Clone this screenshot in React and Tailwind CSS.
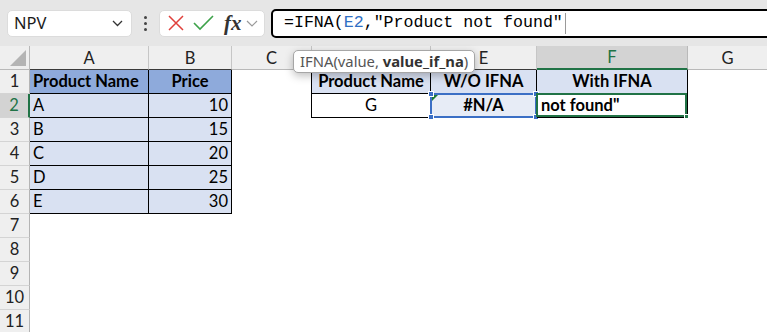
const cellFont = { fontFamily: 'Lato, "Noto Sans", sans-serif' };

function Corner() {
  return (
    <div className="relative bg-[#efefef] border-r border-b border-[#b9b9b9]">
      <svg width="30" height="24" className="absolute left-0 top-0">
        <polygon points="10,20 26,4 26,20" fill="#b4b4b4" />
      </svg>
    </div>
  );
}

function ColHead({ label, active, dark }) {
  if (active) {
    return (
      <div className="flex items-center justify-center bg-[#d3d3d3] border-r border-[#b9b9b9] border-b-2 border-b-[#217346] text-[#217346] text-[16.5px] pt-[1px]">
        {label}
      </div>
    );
  }
  return (
    <div
      className={
        'flex items-center justify-center bg-[#efefef] border-r border-[#c6c6c6] border-b text-[16.5px] text-[#222] pt-[1px] ' +
        (dark ? 'border-b-[#3a3a3a]' : 'border-b-[#b9b9b9]')
      }
    >
      {label}
    </div>
  );
}

function RowHead({ n, active }) {
  if (active) {
    return (
      <div className="flex items-center justify-center bg-[#d3d3d3] border-b border-[#d4d4d4] border-r-2 border-r-[#217346] text-[#217346] text-[16.5px]">
        {n}
      </div>
    );
  }
  return (
    <div className="flex items-center justify-center bg-[#efefef] border-b border-[#d4d4d4] border-r border-r-[#b4b4b4] text-[16.5px] text-[#222]">
      {n}
    </div>
  );
}

function Cell({ className = '', children }) {
  return (
    <div className={'relative flex items-center text-[16.5px] text-black ' + className}>
      {children}
    </div>
  );
}

const products = [
  ['A', 10],
  ['B', 15],
  ['C', 20],
  ['D', 25],
  ['E', 30],
];

export default function App() {
  const rows = [];

  // row 1
  rows.push(
    <RowHead key="r1" n={1} />,
    <Cell key="a1" className="bg-[#8eaadb] border-r border-b border-black font-bold pl-[3px]">Product Name</Cell>,
    <Cell key="b1" className="bg-[#8eaadb] border-r border-b border-black font-bold justify-center">Price</Cell>,
    <Cell key="c1" className="border-r border-black" />,
    <Cell key="d1" className="bg-[#d9e1f2] border-r border-b border-black font-bold justify-center">Product Name</Cell>,
    <Cell key="e1" className="bg-[#d9e1f2] border-r border-b border-black font-bold justify-center">W/O IFNA</Cell>,
    <Cell key="f1" className="bg-[#d9e1f2] border-r border-b border-black font-bold justify-center">With IFNA</Cell>,
    <Cell key="g1" />
  );

  // rows 2..6
  products.forEach(([name, price], i) => {
    const n = i + 2;
    rows.push(
      <RowHead key={'r' + n} n={n} active={n === 2} />,
      <Cell key={'a' + n} className="bg-[#d9e1f2] border-r border-b border-black pl-[3px]">{name}</Cell>,
      <Cell key={'b' + n} className="bg-[#d9e1f2] border-r border-b border-black justify-end pr-[3px]">{price}</Cell>
    );
    if (n === 2) {
      rows.push(
        <Cell key="c2" className="border-r border-black" />,
        <Cell key="d2" className="border-r border-b border-black justify-center">G</Cell>,
        <Cell key="e2" className="bg-[#e7ecf6] border-r border-b border-black font-bold justify-center">
          #N/A
          <div className="absolute -left-[1px] -top-[1px] -right-[1px] -bottom-[1px] border-2 border-[#3b6fc5]" />
          <svg width="6" height="6" className="absolute left-[1px] top-[1px]">
            <polygon points="0,0 6,0 0,6" fill="#1e7b34" />
          </svg>
          <div className="absolute -left-[3px] -top-[3px] w-[6px] h-[6px] bg-[#3b6fc5] border border-white" />
          <div className="absolute -right-[3px] -top-[3px] w-[6px] h-[6px] bg-[#3b6fc5] border border-white" />
          <div className="absolute -left-[3px] -bottom-[3px] w-[6px] h-[6px] bg-[#3b6fc5] border border-white" />
          <div className="absolute -right-[3px] -bottom-[3px] w-[6px] h-[6px] bg-[#3b6fc5] border border-white" />
        </Cell>,
        <Cell key="f2" className="border-r border-b border-black font-bold pl-[4px]">
          not found"
          <div className="absolute -left-[1px] -top-[1px] right-0 bottom-0 border-2 border-[#217346]" />
          <div className="absolute -right-[2px] -bottom-[2px] w-[5px] h-[5px] bg-[#217346] border border-white" />
        </Cell>,
        <Cell key="g2" />
      );
    } else {
      rows.push(
        <Cell key={'c' + n} />,
        <Cell key={'d' + n} />,
        <Cell key={'e' + n} />,
        <Cell key={'f' + n} />,
        <Cell key={'g' + n} />
      );
    }
  });

  for (let n = 7; n <= 11; n++) {
    rows.push(<RowHead key={'r' + n} n={n} />);
    for (let c = 0; c < 7; c++) rows.push(<Cell key={'x' + n + c} />);
  }

  return (
    <div className="relative w-[767px] h-[332px] overflow-hidden bg-white" style={cellFont}>
      {/* Toolbar */}
      <div className="flex items-center h-[46px] bg-[#e6e6e6] pl-[7px]" style={{ fontFamily: '"Noto Sans", "Open Sans", sans-serif' }}>
        <div className="flex items-center justify-between w-[125px] h-[27px] bg-white rounded-[5px] border border-[#dcdcdc] pl-[6px] pr-[8px]">
          <span className="text-[16.5px] text-[#1a1a1a]">NPV</span>
          <svg width="11" height="7" viewBox="0 0 11 7">
            <polyline points="1,1 5.5,5.5 10,1" fill="none" stroke="#333" strokeWidth="1.3" />
          </svg>
        </div>
        <div className="flex flex-col items-center justify-center gap-[3px] w-[27px]">
          <div className="w-[3px] h-[3px] rounded-full bg-[#444]" />
          <div className="w-[3px] h-[3px] rounded-full bg-[#444]" />
          <div className="w-[3px] h-[3px] rounded-full bg-[#444]" />
        </div>
        <div className="flex items-center w-[106px] h-[27px] bg-white rounded-[5px] border border-[#dcdcdc] pl-[8px]">
          <svg width="16" height="16" viewBox="0 0 16 16">
            <path d="M1 1 L15 15 M15 1 L1 15" stroke="#e0403c" strokeWidth="1.5" fill="none" />
          </svg>
          <svg width="21" height="16" viewBox="0 0 21 16" className="ml-[9px]">
            <polyline points="1,8 7,14 20,1" stroke="#3da24a" strokeWidth="1.6" fill="none" />
          </svg>
          <span
            className="ml-[10px] text-[21px] italic font-bold text-[#333] leading-none"
            style={{ fontFamily: '"Liberation Serif", serif' }}
          >
            fx
          </span>
          <svg width="12" height="8" viewBox="0 0 12 8" className="ml-[4px] mt-[2px]">
            <polyline points="1,1 6,6 11,1" fill="none" stroke="#9a9a9a" strokeWidth="1.2" />
          </svg>
        </div>
        <div className="relative flex items-center flex-1 h-[29px] ml-[6px] -mr-[6px] bg-white border-2 border-black rounded-[5px] pl-[11px]">
          <span className="text-[16.6px] text-black whitespace-pre" style={{ fontFamily: '"Liberation Mono", monospace' }}>
            =IFNA(<span className="text-[#2f6fc4]">E2</span>,"Product not found"
          </span>
          <div className="w-[1px] h-[21px] bg-[#9a9a9a] ml-[2px]" />
        </div>
      </div>

      {/* Grid */}
      <div className="grid grid-cols-[30px_119px_83px_80px_119px_106px_151px_80px] grid-rows-[24px_repeat(11,24px)]">
        <Corner />
        <ColHead label="A" dark />
        <ColHead label="B" dark />
        <ColHead label="C" />
        <ColHead label="D" dark />
        <ColHead label="E" dark />
        <ColHead label="F" active />
        <ColHead label="G" />
        {rows}
      </div>

      {/* Function tooltip */}
      <div
        className="absolute left-[293px] top-[50px] h-[23px] flex items-center px-[6px] bg-white border border-[#a6a6a6] rounded-[5px] shadow-[0_3px_8px_rgba(0,0,0,0.25)] text-[14.8px] text-[#555] whitespace-nowrap"
        style={{ fontFamily: '"Noto Sans", "Open Sans", sans-serif' }}
      >
        IFNA(value,&nbsp;<span className="font-bold text-[#333]">value_if_na</span>)
      </div>
    </div>
  );
}
